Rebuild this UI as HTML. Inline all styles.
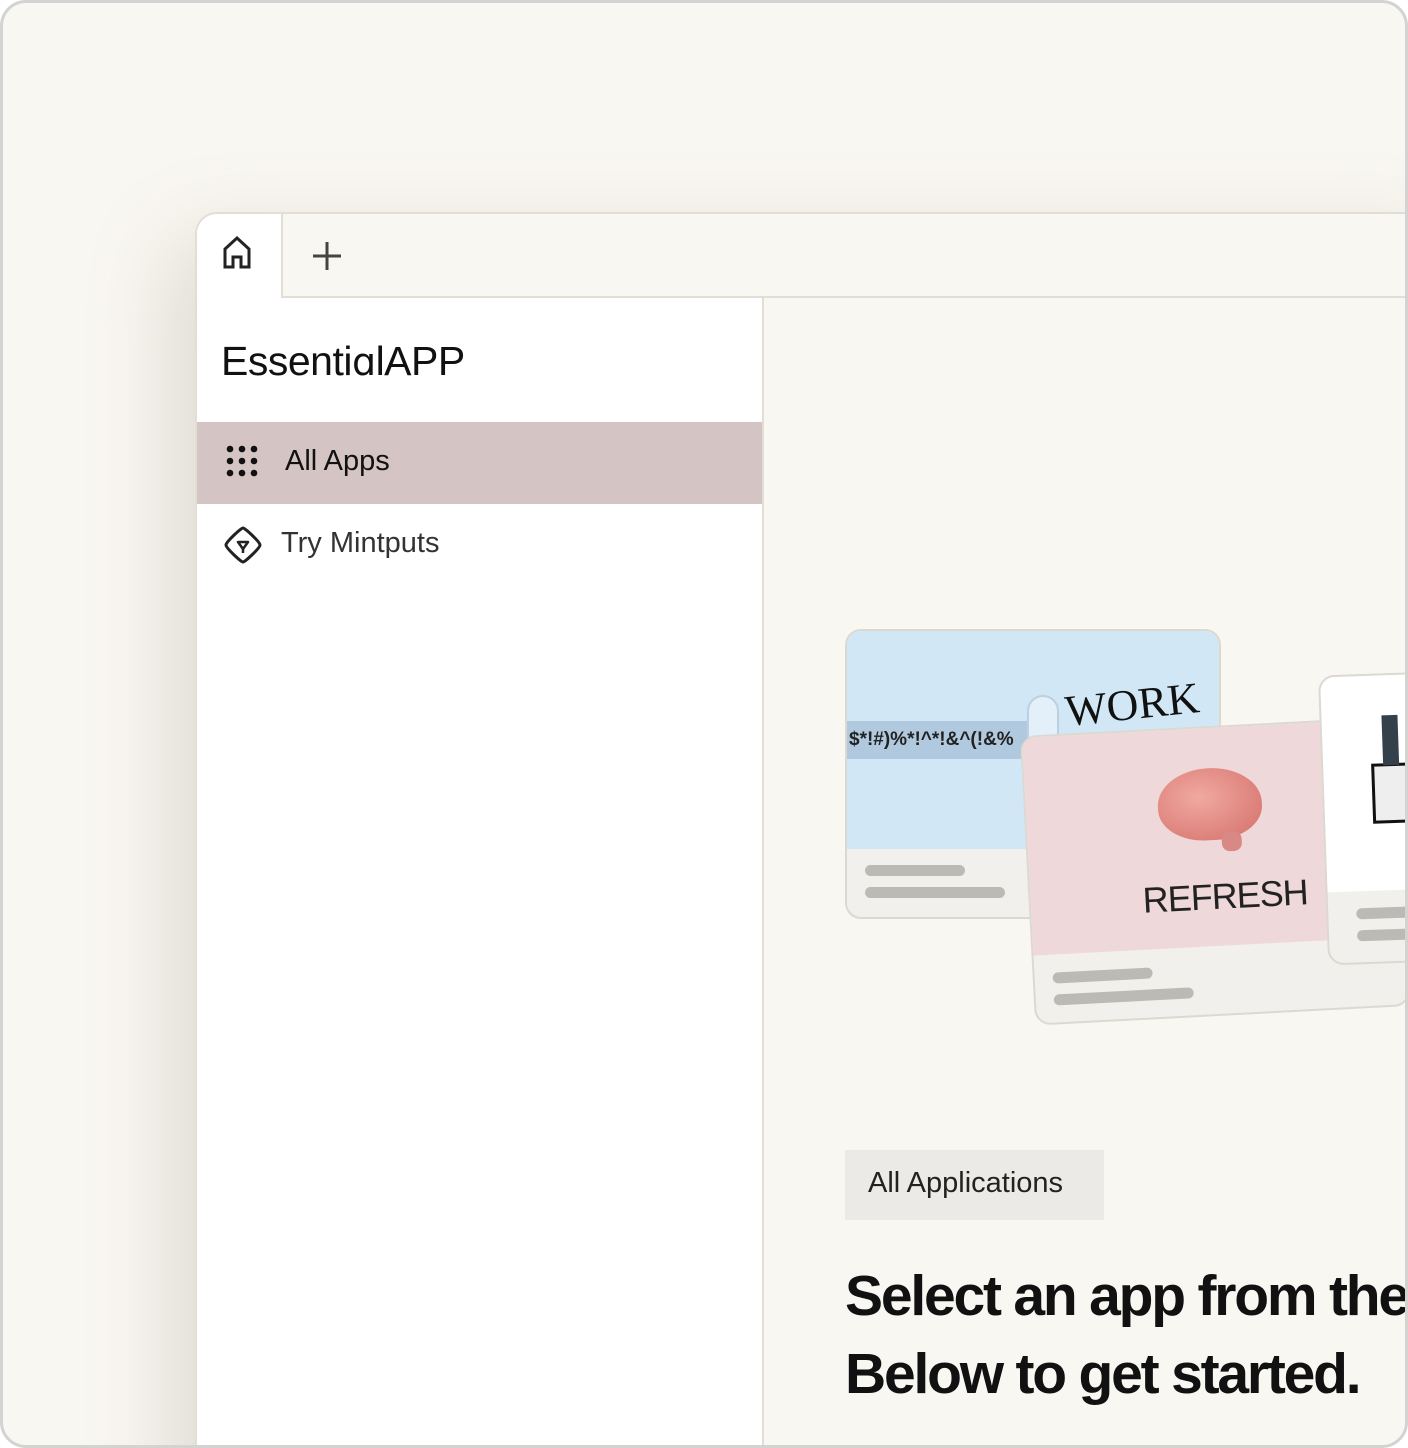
<!DOCTYPE html>
<html><head><meta charset="utf-8"><style>
*{margin:0;padding:0;box-sizing:border-box}
html,body{width:1408px;height:1448px;overflow:hidden;background:#fff}
.frame{position:absolute;left:0;top:0;width:1408px;height:1448px;border:3px solid #d3d3d1;border-radius:26px;background:#f9f7f1;overflow:hidden;font-family:"Liberation Sans",sans-serif}
.win{position:absolute;left:192px;top:209px;width:1260px;height:1300px;border:2px solid #e2ded6;border-radius:22px 0 0 0;background:#f8f7f2;box-shadow:-20px 30px 90px rgba(120,110,90,.22);overflow:hidden}
.tabbar{position:absolute;left:0;top:0;right:0;height:84px;background:#f8f7f2;border-bottom:2px solid #e2ded6}
.hometab{position:absolute;left:0;top:0;width:86px;height:86px;background:#fff;border-right:2px solid #e2ded6}
.side{position:absolute;left:0;top:84px;width:567px;bottom:0;background:#fff;border-right:2px solid #e2ded6}
.logo{position:absolute;left:24px;top:40px;font-size:41px;color:#111;letter-spacing:-0.5px}
.sel{position:absolute;left:0;top:124px;width:565px;height:82px;background:#d4c4c4}
.item{position:absolute;font-size:29px;color:#111}
.card{position:absolute;border:2px solid #dcd9d2;border-radius:16px;overflow:hidden;background:#f1f0ec}
.bar{position:absolute;height:11px;border-radius:6px;background:#bcbab5}
</style></head><body><div class="frame">
<div class="win">
 <div class="tabbar"></div>
 <div class="hometab">
  <svg style="position:absolute;left:25px;top:22px" width="32" height="34" viewBox="0 0 32 34"><path d="M3 31V13L15 2L27 13V31H19V21H11V31Z" fill="none" stroke="#222" stroke-width="3" stroke-linejoin="miter"/></svg>
 </div>
 <svg style="position:absolute;left:114px;top:26px" width="32" height="32" viewBox="0 0 32 32"><path d="M16 2V30M2 16H30" stroke="#444" stroke-width="3"/></svg>
 <div class="side">
  <div class="logo">Essenti<span style="font-family:'DejaVu Sans',sans-serif;font-size:38px">ɑ</span>lAPP</div>
  <div class="sel"></div>
  <svg style="position:absolute;left:28px;top:146px" width="34" height="34" viewBox="0 0 34 34"><g fill="#111"><circle cx="5" cy="5" r="3.3"/><circle cx="17" cy="5" r="3.3"/><circle cx="29" cy="5" r="3.3"/><circle cx="5" cy="17" r="3.3"/><circle cx="17" cy="17" r="3.3"/><circle cx="29" cy="17" r="3.3"/><circle cx="5" cy="29" r="3.3"/><circle cx="17" cy="29" r="3.3"/><circle cx="29" cy="29" r="3.3"/></g></svg>
  <div class="item" style="left:88px;top:147px">All Apps</div>
  <svg style="position:absolute;left:25px;top:226px" width="42" height="42" viewBox="0 0 42 42"><path d="M21 4C23 4 38 18 38 21C38 24 23 38 21 38C19 38 4 24 4 21C4 18 19 4 21 4Z" fill="none" stroke="#222" stroke-width="3" stroke-linejoin="round"/><path d="M16 18H26L21 25Z" fill="none" stroke="#222" stroke-width="2.5" stroke-linejoin="round"/><path d="M21 25V29" stroke="#222" stroke-width="2.5"/></svg>
  <div class="item" style="left:84px;top:229px;color:#333">Try Mintputs</div>
 </div>
 <!-- cards -->
 <div class="card" style="left:648px;top:415px;width:376px;height:290px">
  <div style="position:absolute;left:0;top:0;right:0;height:218px;background:#d1e7f5"></div>
  <div style="position:absolute;left:0;top:90px;width:200px;height:38px;background:#b0c9de"></div>
  <div style="position:absolute;left:2px;top:98px;font-size:19px;color:#222;font-weight:bold">$*!#)%*!^*!&amp;^(!&amp;%</div>
  <div style="position:absolute;left:180px;top:64px;width:32px;height:62px;border:2px solid #bcd0e0;border-radius:16px;background:#e4f0f9"></div>
  <div style="position:absolute;left:218px;top:48px;font-family:'Liberation Serif',serif;font-size:44px;color:#111;transform:rotate(-6deg)">WORK</div>
  <div class="bar" style="left:18px;top:234px;width:100px"></div>
  <div class="bar" style="left:18px;top:256px;width:140px"></div>
 </div>
 <div class="card" style="left:823px;top:522px;width:376px;height:290px;transform:rotate(-3deg);transform-origin:0 0">
  <div style="position:absolute;left:0;top:0;right:0;height:218px;background:#efd8da"></div>
  <div style="position:absolute;left:132px;top:40px;width:104px;height:72px;border-radius:50% 50% 45% 45%;background:radial-gradient(ellipse at 40% 40%,#f0a9a0,#d46f6a);"></div>
  <div style="position:absolute;left:194px;top:104px;width:20px;height:20px;border-radius:40%;background:#d88985"></div>
  <div style="position:absolute;left:112px;top:148px;font-size:36px;color:#222;letter-spacing:-1px">REFRESH</div>
  <div class="bar" style="left:18px;top:236px;width:100px"></div>
  <div class="bar" style="left:18px;top:258px;width:140px"></div>
 </div>
 <div class="card" style="left:1126px;top:458px;width:200px;height:290px;transform:rotate(-2deg);background:#f1f0ec">
  <div style="position:absolute;left:0;top:0;right:0;height:215px;background:#fff"></div>
  <div style="position:absolute;left:48px;top:88px;width:50px;height:60px;border:3px solid #111;background:#eee"></div>
  <div style="position:absolute;left:60px;top:40px;width:16px;height:50px;background:#34404a"></div>
  <div class="bar" style="left:28px;top:232px;width:100px"></div>
  <div class="bar" style="left:28px;top:254px;width:100px"></div>
 </div>
 <div style="position:absolute;left:648px;top:936px;width:259px;height:70px;background:#ebeae6"></div>
 <div style="position:absolute;left:671px;top:953px;font-size:29px;color:#222">All Applications</div>
 <div style="position:absolute;left:648px;top:1043px;font-size:57px;font-weight:bold;color:#111;letter-spacing:-2.2px;line-height:78px;white-space:nowrap">Select an app from the<br>Below to get started.</div>
</div>
</div></body></html>
